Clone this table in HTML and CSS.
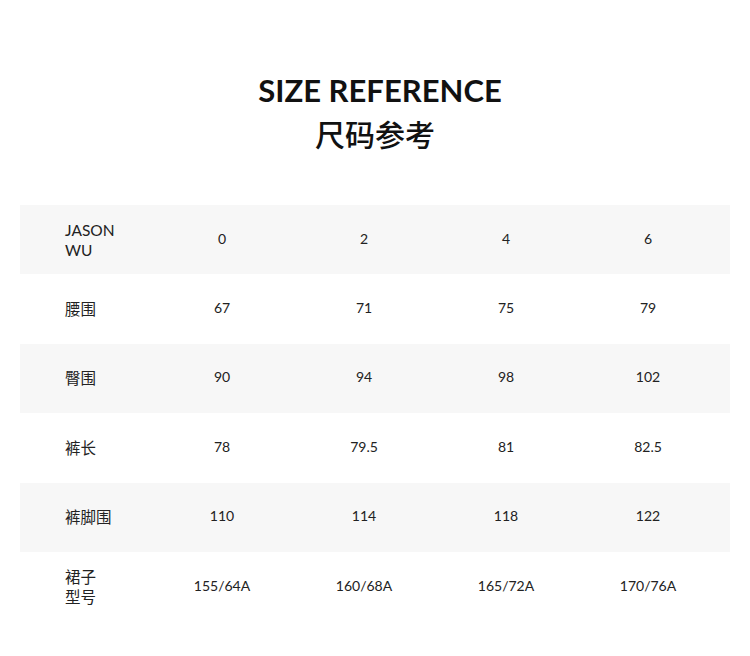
FILE: index.html
```html
<!DOCTYPE html>
<html lang="zh">
<head>
<meta charset="utf-8">
<link rel="stylesheet" href="styles.css">
</head>
<body>
<div class="page">
  <header class="head">
    <h1 class="title-en">SIZE REFERENCE</h1>
    <h2 class="title-cn">尺码参考</h2>
  </header>
  <div class="table">
    <div class="row shade">
      <div class="label">JASON<br>WU</div>
      <div class="cell">0</div><div class="cell">2</div><div class="cell">4</div><div class="cell">6</div>
    </div>
    <div class="row">
      <div class="label">腰围</div>
      <div class="cell">67</div><div class="cell">71</div><div class="cell">75</div><div class="cell">79</div>
    </div>
    <div class="row shade">
      <div class="label">臀围</div>
      <div class="cell">90</div><div class="cell">94</div><div class="cell">98</div><div class="cell">102</div>
    </div>
    <div class="row">
      <div class="label">裤长</div>
      <div class="cell">78</div><div class="cell">79.5</div><div class="cell">81</div><div class="cell">82.5</div>
    </div>
    <div class="row shade">
      <div class="label">裤脚围</div>
      <div class="cell">110</div><div class="cell">114</div><div class="cell">118</div><div class="cell">122</div>
    </div>
    <div class="row">
      <div class="label">裙子<br>型号</div>
      <div class="cell">155/64A</div><div class="cell">160/68A</div><div class="cell">165/72A</div><div class="cell">170/76A</div>
    </div>
  </div>
</div>
</body>
</html>
```
FILE: styles.css
```css
html, body {
  margin: 0;
  padding: 0;
  background: #fff;
}
body {
  font-family: "Lato", "Noto Sans CJK SC", sans-serif;
  color: #222;
}
.page {
  width: 750px;
  height: 656px;
  padding: 0 20px;
  box-sizing: border-box;
}
.head {
  padding-top: 71px;
  text-align: center;
}
.title-en {
  margin: 0;
  padding-left: 10px;
  font-family: "Lato", sans-serif;
  font-weight: 700;
  font-size: 31px;
  line-height: 38px;
  letter-spacing: 0;
  color: #111;
}
.title-cn {
  margin: 4px 0 0;
  font-family: "Noto Sans CJK SC", sans-serif;
  font-weight: 500;
  font-size: 30px;
  line-height: 40px;
  color: #111;
}
.table {
  margin-top: 52px;
}
.row {
  display: grid;
  grid-template-columns: 131px repeat(4, 142px) 1fr;
  align-items: center;
  height: 69.4px;
  font-size: 14px;
  line-height: 20px;
}
.row.shade {
  background: #f7f7f7;
}
.label {
  padding-left: 45px;
  font-size: 15.5px;
  font-family: "Lato", "Noto Sans CJK SC", sans-serif;
}
.cell {
  text-align: center;
  margin-top: -2px;
}
```
